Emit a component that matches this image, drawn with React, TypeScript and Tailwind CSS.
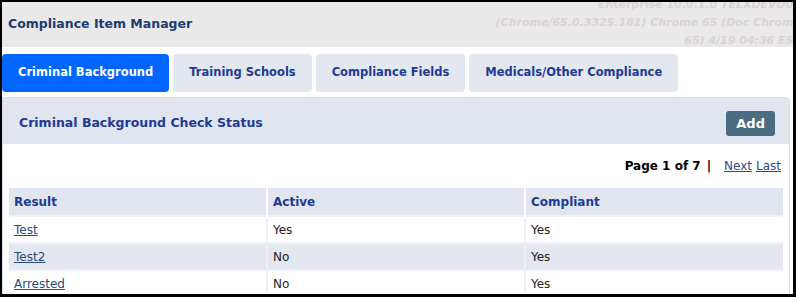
import React from "react"

type Row = { result: string; active: string; compliant: string }

const rows: Row[] = [
  { result: "Test", active: "Yes", compliant: "Yes" },
  { result: "Test2", active: "No", compliant: "Yes" },
  { result: "Arrested", active: "No", compliant: "Yes" },
]

const tabs = ["Criminal Background", "Training Schools", "Compliance Fields", "Medicals/Other Compliance"]

export default function App() {
  return (
    <div
      className="w-[796px] h-[297px] overflow-hidden bg-black pl-[2px] pt-[2px] pr-[3px] pb-[3px]"
      style={{ fontFamily: '"DejaVu Sans", Verdana, sans-serif' }}
    >
      <div className="h-full bg-white overflow-hidden flex flex-col">
        {/* Header */}
        <div className="h-[45px] bg-[#e9e9e9] flex items-center justify-between relative overflow-hidden shrink-0">
          <h1 className="pl-[6px] text-[12.5px] font-bold text-[#1e3a6e]">Compliance Item Manager</h1>
          <div className="absolute right-[-8px] top-[-6px] text-right text-[11px] font-bold leading-[18px] text-[#dcd2d2] whitespace-nowrap">
            <div>
              Enterprise 10.0.1.0 <span className="italic">TELXDEVD01</span>
            </div>
            <div className="italic">(Chrome/65.0.3325.181) Chrome 65 (Doc Chrome</div>
            <div className="italic">65) 4/19 04:36 EST</div>
          </div>
        </div>

        {/* Tabs */}
        <div className="flex gap-[4px] mt-[7px] shrink-0">
          {tabs.map((t, i) => (
            <button
              key={t}
              className={
                i === 0
                  ? "h-[38px] px-[16px] rounded-[4px] bg-[#0066ff] text-white text-[11.5px] font-bold"
                  : "h-[38px] px-[16px] rounded-[4px] bg-[#e3e7f0] text-[#1f3a93] text-[11.5px] font-bold"
              }
            >
              {t}
            </button>
          ))}
        </div>

        {/* Panel */}
        <div className="mt-[5px] mr-[3px] flex-1 border border-[#d8dde8] rounded-tr-[5px] flex flex-col">
          <div className="h-[46px] bg-[#e1e5ef] flex items-center justify-between pt-[5px] pl-[16px] pr-[14px] shrink-0">
            <h2 className="text-[12.5px] font-bold text-[#1f3a93]">Criminal Background Check Status</h2>
            <button className="h-[25px] px-[10px] rounded-[3px] bg-[#4a6b80] text-white text-[13px] font-bold">Add</button>
          </div>

          <div className="flex justify-end items-center h-[44px] pr-[8px] text-[12px]">
            <span className="font-bold text-black">Page 1 of 7</span>
            <span className="font-bold text-black ml-[6px]">|</span>
            <a href="#" className="ml-[13px] text-[#2a4a8a] underline">Next</a>
            <a href="#" className="ml-[4px] text-[#2a4a8a] underline">Last</a>
          </div>

          <div className="px-[6px]">
            <table className="w-full border-collapse text-[12px] table-fixed">
              <thead>
                <tr className="bg-[#e1e5ef] h-[28px]">
                  <th className="text-left font-bold text-[#1f3a93] px-[5px]">Result</th>
                  <th className="text-left font-bold text-[#1f3a93] px-[5px] border-l-2 border-white">Active</th>
                  <th className="text-left font-bold text-[#1f3a93] px-[5px] border-l-2 border-white">Compliant</th>
                </tr>
              </thead>
              <tbody>
                {rows.map((r, i) => (
                  <tr key={r.result} className={i % 2 === 1 ? "bg-[#e3e7f0] h-[27px]" : "bg-white h-[27px]"}>
                    <td className="px-[5px] border-t-2 border-[#eef0f5]">
                      <a href="#" className="text-[#2a4a7a] underline">{r.result}</a>
                    </td>
                    <td className="px-[5px] text-[#222] border-l-2 border-t-2 border-[#eef0f5]">{r.active}</td>
                    <td className="px-[5px] text-[#222] border-l-2 border-t-2 border-[#eef0f5]">{r.compliant}</td>
                  </tr>
                ))}
              </tbody>
            </table>
          </div>
        </div>
      </div>
    </div>
  )
}
